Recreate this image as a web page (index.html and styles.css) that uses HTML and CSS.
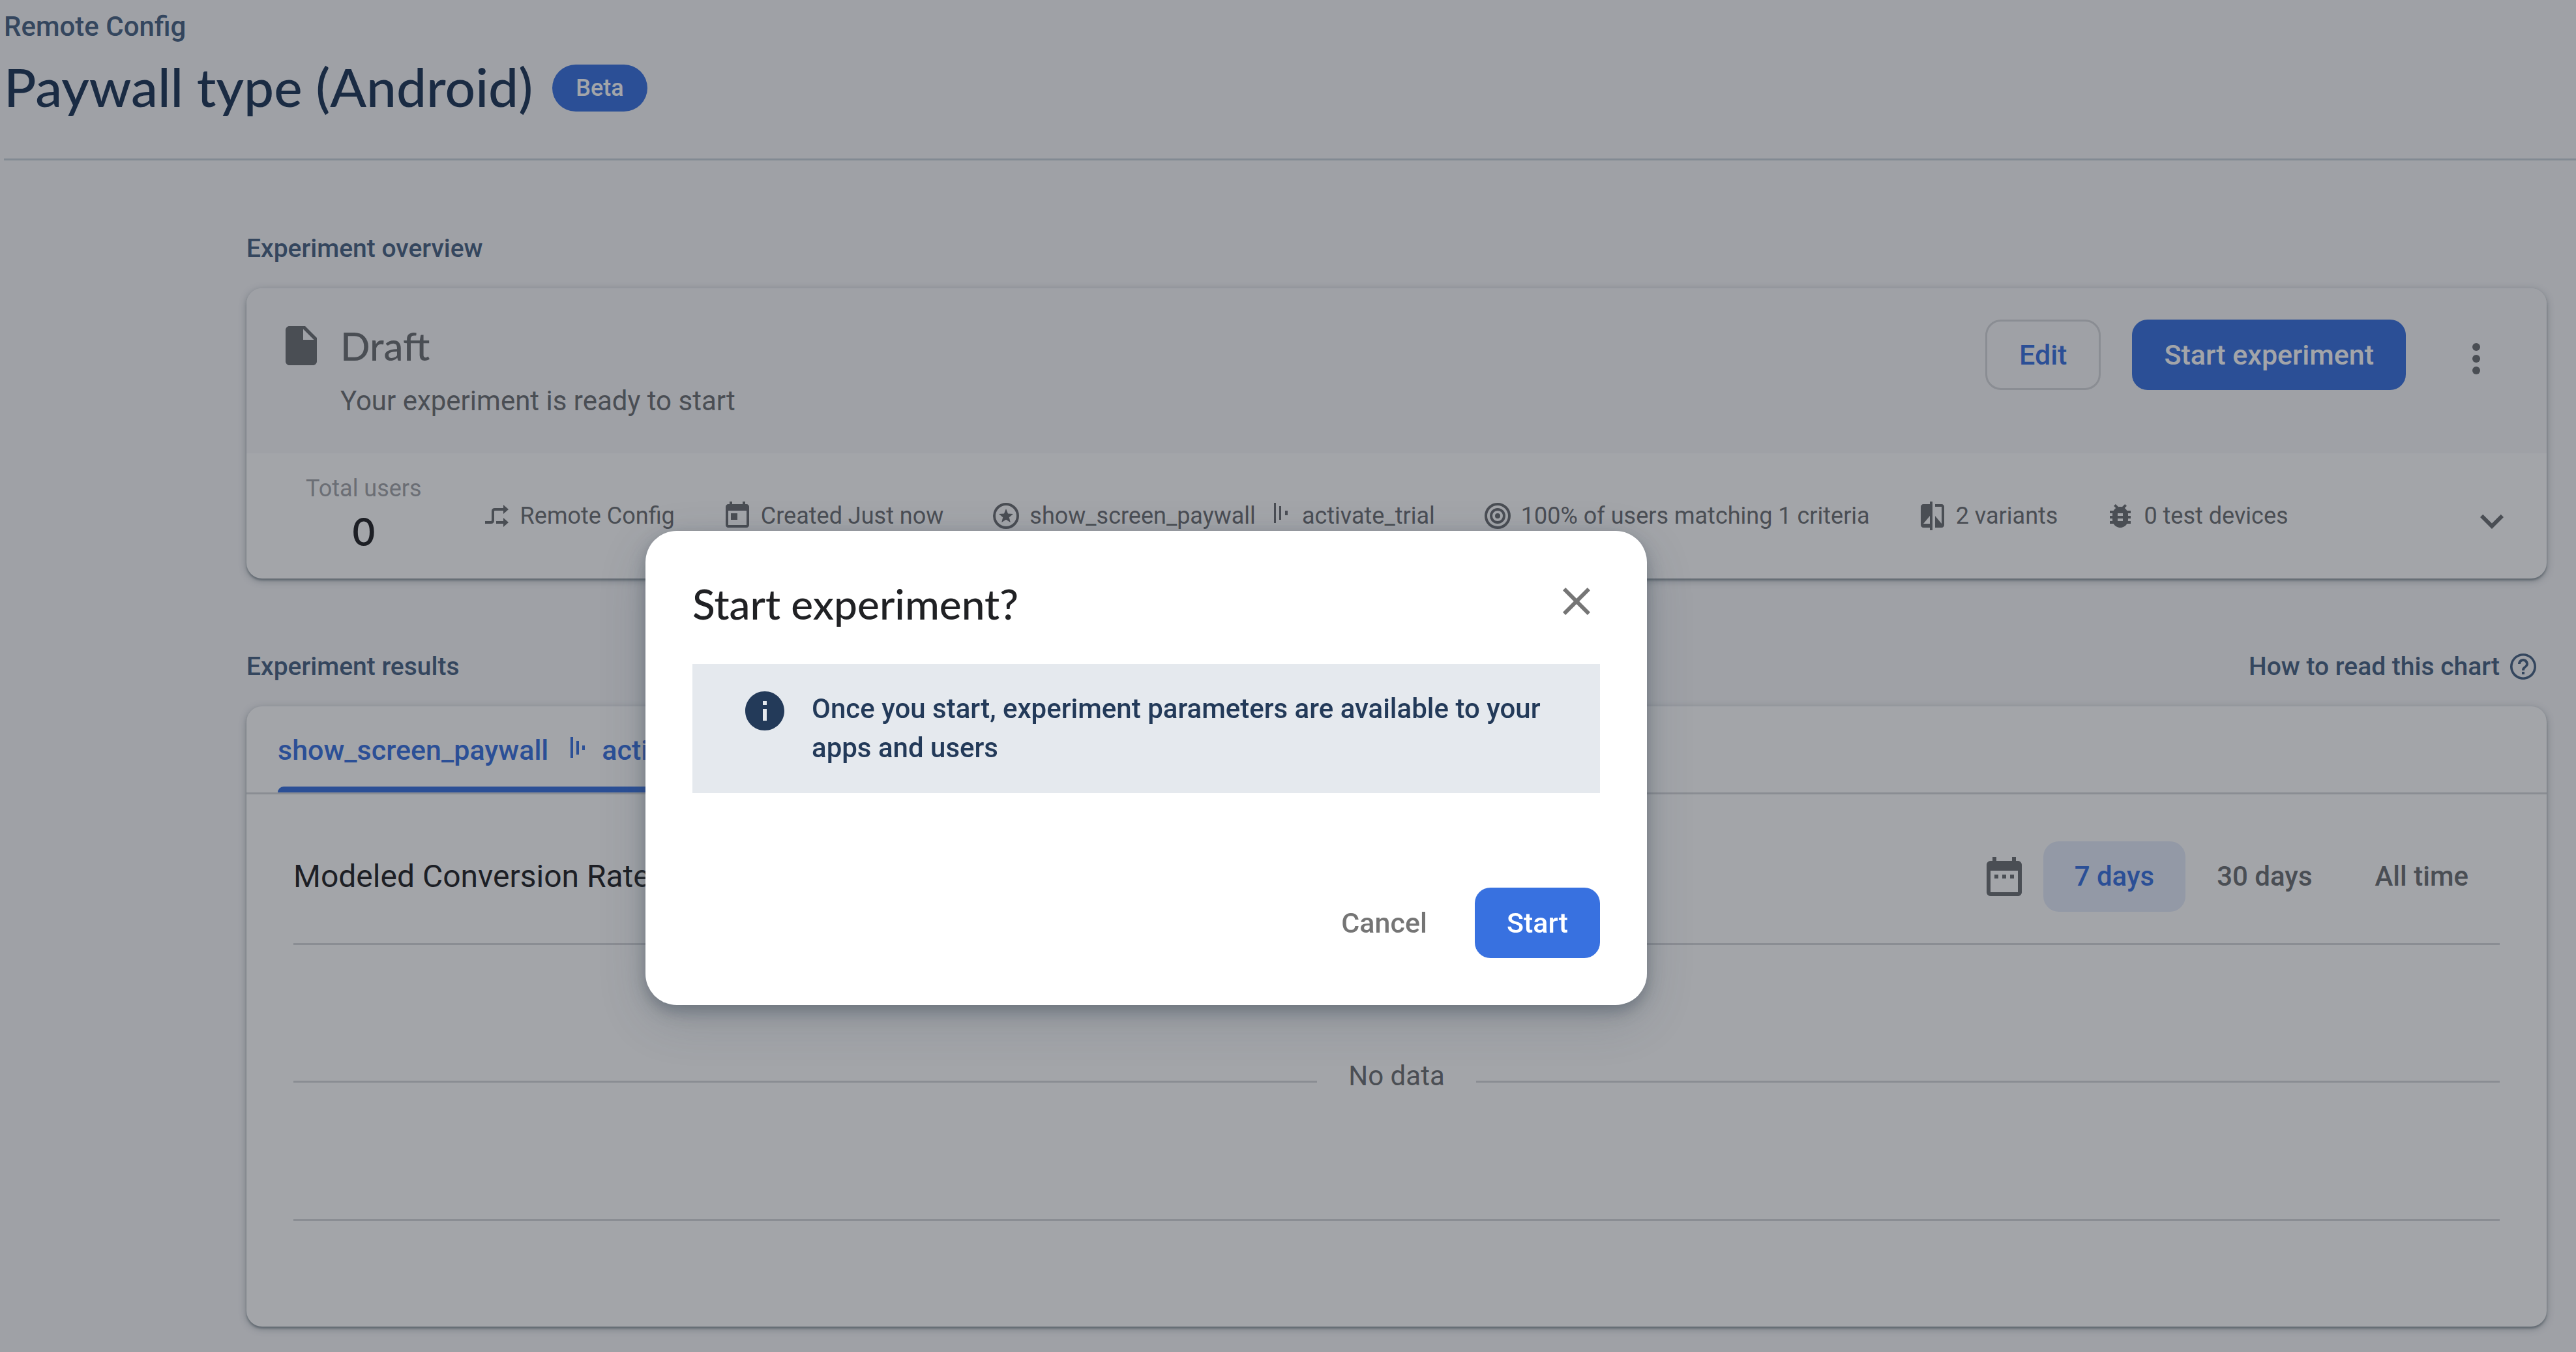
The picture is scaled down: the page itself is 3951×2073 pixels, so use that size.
FILE: index.html
```html
<!DOCTYPE html>
<html lang="en">
<head>
<meta charset="utf-8">
<meta name="viewport" content="width=device-width, initial-scale=1">
<title>Paywall type (Android)</title>
<link rel="stylesheet" href="styles.css">
</head>
<body>
<header class="page-header">
  <a class="crumb" href="#">Remote Config</a>
  <div class="title-row">
    <h1 class="page-title">Paywall type (Android)</h1>
    <span class="badge">Beta</span>
  </div>
</header>

<main class="content">
  <section>
    <div class="section-head">
      <h2 class="section-title">Experiment overview</h2>
    </div>
    <div class="card">
      <div class="overview-head">
        <div class="status">
          <svg class="icon-lg" viewBox="0 0 24 24" aria-hidden="true"><path d="M14 2H6c-1.1 0-1.99.9-1.99 2L4 20c0 1.1.89 2 1.99 2H18c1.1 0 2-.9 2-2V8l-6-6zm-1 7V3.5L18.5 9H13z"/></svg>
          <h3 class="status-title">Draft</h3>
          <p class="status-text">Your experiment is ready to start</p>
        </div>
        <div class="overview-actions">
          <button class="button button-outline" type="button">Edit</button>
          <button class="button button-primary" type="button">Start experiment</button>
          <button class="icon-button more" type="button" aria-label="More options">
            <svg class="icon-lg" viewBox="0 0 24 24" aria-hidden="true"><circle cx="12" cy="6" r="2"/><circle cx="12" cy="12" r="2"/><circle cx="12" cy="18" r="2"/></svg>
          </button>
        </div>
      </div>
      <div class="overview-body">
        <div class="total">
          <span class="total-label">Total users</span>
          <span class="total-value">0</span>
        </div>
        <ul class="facts">
          <li class="fact">
            <svg class="icon" viewBox="0 0 24 24" aria-hidden="true"><path d="M3 17h4.500q1.500 0 1.500-1.500v-7q0-1.500 1.500-1.500H18M11.500 17H18" fill="none" stroke="currentColor" stroke-width="2"/><path d="M17 3.500 21 7l-4 3.500zM17 13.500l4 3.500-4 3.500z"/></svg>
            Remote Config
          </li>
          <li class="fact">
            <svg class="icon" viewBox="0 0 24 24" aria-hidden="true"><path d="M19 3h-1V1h-2v2H8V1H6v2H5c-1.110 0-1.990.9-1.990 2L3 19c0 1.100.89 2 2 2h14c1.100 0 2-.9 2-2V5c0-1.100-.9-2-2-2zm0 16H5V8h14v11zM7 10h5v5H7z"/></svg>
            Created Just now
          </li>
          <li class="fact">
            <svg class="icon" viewBox="0 0 24 24" aria-hidden="true"><circle cx="12" cy="12" r="9" fill="none" stroke="currentColor" stroke-width="2"/><path d="M12 6.500l1.500 3.700 4 .3-3.100 2.600 1 3.900L12 14.900 8.600 17l1-3.900-3.100-2.600 4-.3z"/></svg>
            <span>show_screen_paywall</span>
            <svg class="funnel" viewBox="0 0 24 48" aria-hidden="true"><path d="M0 4h3v31H0zM8 9h3v21H8zM17 16h4v7h-4z"/></svg>
            <span>activate_trial</span>
          </li>
          <li class="fact">
            <svg class="icon" viewBox="0 0 24 24" aria-hidden="true"><g fill="none" stroke="currentColor" stroke-width="2"><circle cx="12" cy="12" r="9"/><circle cx="12" cy="12" r="5"/></g><circle cx="12" cy="12" r="2"/></svg>
            100% of users matching 1 criteria
          </li>
          <li class="fact">
            <svg class="icon" viewBox="0 0 24 24" aria-hidden="true"><path d="M10 3H5c-1.100 0-2 .9-2 2v14c0 1.100.9 2 2 2h5v2h2V1h-2v2zm0 15H5l5-6v6zm9-15h-5v2h5v13l-5-6v9h5c1.100 0 2-.9 2-2V5c0-1.100-.9-2-2-2z"/></svg>
            2 variants
          </li>
          <li class="fact">
            <svg class="icon" viewBox="0 0 24 24" aria-hidden="true"><path d="M20 8h-2.810c-.45-.78-1.070-1.450-1.820-1.960L17 4.410 15.590 3l-2.170 2.170C12.960 5.060 12.490 5 12 5c-.49 0-.96.060-1.410.170L8.410 3 7 4.410l1.620 1.630C7.880 6.550 7.260 7.220 6.810 8H4v2h2.090c-.05.33-.09.66-.09 1v1H4v2h2v1c0 .34.04.67.09 1H4v2h2.810c1.040 1.790 2.970 3 5.190 3s4.150-1.210 5.190-3H20v-2h-2.090c.05-.33.09-.66.09-1v-1h2v-2h-2v-1c0-.34-.04-.67-.09-1H20V8zm-6 8h-4v-2h4v2zm0-4h-4v-2h4v2z"/></svg>
            0 test devices
          </li>
        </ul>
        <button class="icon-button expand" type="button" aria-label="Show details">
          <svg class="icon-lg" viewBox="0 0 24 24" aria-hidden="true"><path d="M16.590 8.590L12 13.170 7.410 8.590 6 10l6 6 6-6z"/></svg>
        </button>
      </div>
    </div>
  </section>

  <section>
    <div class="section-head">
      <h2 class="section-title">Experiment results</h2>
      <a class="help" href="#">How to read this chart
        <svg class="icon" viewBox="0 0 24 24" aria-hidden="true"><path d="M11 18h2v-2h-2v2zm1-16C6.480 2 2 6.480 2 12s4.480 10 10 10 10-4.480 10-10S17.520 2 12 2zm0 18.200c-4.520 0-8.200-3.680-8.200-8.200S7.480 3.800 12 3.800s8.200 3.680 8.200 8.200-3.680 8.200-8.200 8.200zm0-14.200c-2.210 0-4 1.790-4 4h2c0-1.100.9-2 2-2s2 .9 2 2c0 2-3 1.750-3 5h2c0-2.250 3-2.500 3-5 0-2.210-1.790-4-4-4z"/></svg>
      </a>
    </div>
    <div class="card">
      <div class="tabs">
        <button class="tab" type="button">
          <span>show_screen_paywall</span>
          <svg class="funnel" viewBox="0 0 24 48" aria-hidden="true"><path d="M0 4h4v32H0zM9 10h4v21H9zM18 17h4v7h-4z"/></svg>
          <span>activate_trial</span>
        </button>
      </div>
      <div class="chart">
        <div class="chart-head">
          <h3 class="chart-title">Modeled Conversion Rate</h3>
          <svg class="icon-lg" viewBox="0 0 24 24" aria-hidden="true"><path d="M19 4h-1V2h-2v2H8V2H6v2H5c-1.100 0-2 .9-2 2v14c0 1.100.9 2 2 2h14c1.100 0 2-.9 2-2V6c0-1.100-.9-2-2-2zm0 16H5V9h14v11zM7 11h2v2H7zm4 0h2v2h-2zm4 0h2v2h-2z"/></svg>
          <div class="ranges">
            <button class="range range-active" type="button">7 days</button>
            <button class="range" type="button">30 days</button>
            <button class="range" type="button">All time</button>
          </div>
        </div>
        <div class="empty"><span class="empty-text">No data</span></div>
      </div>
    </div>
  </section>
</main>

<div class="scrim">
  <section class="dialog" role="dialog" aria-modal="true" aria-labelledby="dialog-title">
    <div class="dialog-head">
      <h2 class="dialog-title" id="dialog-title">Start experiment?</h2>
      <button class="icon-button close" type="button" aria-label="Close">
        <svg class="icon-lg" viewBox="0 0 24 24" aria-hidden="true"><path d="M19 6.410L17.590 5 12 10.590 6.410 5 5 6.410 10.590 12 5 17.590 6.410 19 12 13.410 17.590 19 19 17.590 13.410 12z"/></svg>
      </button>
    </div>
    <div class="notice">
      <svg class="icon-lg" viewBox="0 0 24 24" aria-hidden="true"><path d="M12 2C6.480 2 2 6.480 2 12s4.480 10 10 10 10-4.480 10-10S17.520 2 12 2zm1 15h-2v-6h2v6zm0-8h-2V7h2v2z"/></svg>
      <p class="notice-text">Once you start, experiment parameters are available to your apps and users</p>
    </div>
    <div class="dialog-actions">
      <button class="button button-text" type="button">Cancel</button>
      <button class="button button-primary" type="button">Start</button>
    </div>
  </section>
</div>
</body>
</html>
```
FILE: styles.css
```css
:root {
  --navy: #476282;
  --navy-dark: #1b3456;
  --blue: #3871e0;
  --grey: #6c6e72;
  --ink: #202124;
  --line: #d6d7da;
  --page: #f8f8fa;
  --body-font: "Roboto", sans-serif;
  --display-font: "Lato", sans-serif;
}

* { box-sizing: border-box; }

body {
  margin: 0;
  background: var(--page);
  color: var(--grey);
  font: 400 36px/48px var(--body-font);
}

h1, h2, h3, p, ul { margin: 0; padding: 0; }
svg { display: block; flex: none; fill: currentColor; }

button {
  margin: 0;
  padding: 0;
  border: 0;
  background: none;
  color: inherit;
  font: 500 43px/60px var(--body-font);
  white-space: nowrap;
}

.icon { width: 48px; height: 48px; }
.icon-lg { width: 72px; height: 72px; }
.funnel { width: 24px; height: 48px; }

/* Page header */
.page-header {
  margin-left: 6px;
  padding: 14px 0 60px;
  border-bottom: 3px solid #c9d2db;
}
.crumb {
  display: block;
  color: var(--navy);
  font: 500 42px/54px var(--body-font);
  text-decoration: none;
}
.title-row {
  display: flex;
  align-items: center;
  gap: 30px;
  margin-top: 19px;
}
.page-title {
  padding-bottom: 6px;
  color: var(--navy-dark);
  font: 500 82px/90px var(--display-font);
}
.badge {
  padding: 12px 36px;
  border-radius: 36px;
  background: var(--blue);
  color: #fff;
  font-weight: 500;
}

/* Sections */
.content {
  display: flex;
  flex-direction: column;
  gap: 111px;
  padding: 111px 45px 39px 378px;
}
.section-head {
  display: flex;
  justify-content: space-between;
  margin-bottom: 37px;
  padding-right: 12px;
  color: var(--navy);
}
.section-title { font: 500 39px/48px var(--body-font); }
.help {
  display: flex;
  align-items: center;
  gap: 12px;
  color: inherit;
  font: 500 39px/48px var(--body-font);
  text-decoration: none;
}
.card {
  border-radius: 24px;
  background: #fff;
  box-shadow: 0 3px 3px rgba(68, 84, 95, .4), 0 3px 12px rgba(68, 84, 95, .4);
}

/* Overview card */
.overview-head {
  display: flex;
  justify-content: space-between;
  padding: 48px 36px 53px 48px;
  border-radius: 24px 24px 0 0;
  background: var(--page);
}
.status {
  display: grid;
  grid-template-columns: 72px auto;
  align-items: center;
  gap: 18px 24px;
}
.status-title { font: 500 60px/80px var(--display-font); }
.status-text {
  grid-column: 2;
  font-size: 42px;
  line-height: 54px;
}
.overview-actions {
  display: flex;
  align-items: flex-start;
}
.button {
  padding: 24px 49px;
  border-radius: 24px;
}
.button-outline {
  padding: 21px 49px;
  border: 3px solid var(--line);
  color: var(--blue);
}
.button-outline + .button { margin-left: 48px; }
.button-primary { background: var(--blue); color: #fff; }
.icon-button { display: grid; place-items: center; }
.more { width: 144px; height: 120px; margin-left: 36px; }

.overview-body {
  display: flex;
  align-items: flex-start;
  padding: 24px 48px 38px 91px;
}
.total {
  display: flex;
  flex-direction: column;
  align-items: center;
}
.total-label { color: #a2a4a8; line-height: 60px; }
.total-value {
  color: var(--ink);
  font: 600 60px/70px var(--display-font);
}
.facts {
  display: flex;
  flex: 1;
  gap: 72px;
  margin: 48px 0 0 91px;
  list-style: none;
  white-space: nowrap;
}
.fact { display: flex; gap: 12px; }
.fact .funnel { margin: 0 7px 0 16px; }
.expand { margin-top: 44px; }

/* Results card */
.tabs {
  display: flex;
  padding: 0 48px;
  border-bottom: 3px solid var(--line);
}
.tab {
  display: flex;
  align-items: center;
  padding-top: 37px;
  flex-wrap: wrap;
  gap: 26px 24px;
  color: var(--blue);
}
.tab::after {
  flex: 0 0 100%;
  height: 9px;
  border-radius: 9px 9px 0 0;
  background: var(--blue);
  content: "";
}
.tab .funnel { margin-left: 10px; }
.chart { padding: 0 72px 162px; }
.chart-head {
  display: flex;
  align-items: center;
  gap: 24px;
  padding: 72px 0 48px;
  border-bottom: 3px solid var(--line);
}
.chart-title {
  flex: 1;
  color: var(--ink);
  font: 400 48px/60px var(--body-font);
}
.ranges { display: flex; }
.range {
  padding: 24px 48px;
  border-radius: 24px;
  font-size: 42px;
}
.range-active { background: #e4ebfa; color: var(--blue); }
.empty {
  display: flex;
  align-items: center;
  gap: 48px;
  padding: 177px 0 179px;
  border-bottom: 3px solid var(--line);
}
.empty::before,
.empty::after {
  flex: 1;
  height: 3px;
  background: var(--line);
  content: "";
}
.empty-text { padding-bottom: 16px; font-size: 42px; }

/* Confirmation dialog over the dimmed page */
.scrim {
  position: fixed;
  inset: 0;
  padding: 814px 0 0 990px;
  background: rgba(26, 31, 41, .4);
}
.dialog {
  width: 1536px;
  max-width: 100%;
  padding: 72px;
  border-radius: 48px;
  background: #fff;
  box-shadow: 0 9px 24px rgba(50, 65, 80, .4), 0 24px 72px rgba(50, 65, 80, .2);
}
.dialog-head {
  display: flex;
  justify-content: space-between;
  align-items: flex-start;
}
.dialog-title {
  color: var(--ink);
  font: 500 64px/80px var(--display-font);
}
.close { color: #757575; }
.notice {
  display: flex;
  gap: 36px;
  margin-top: 52px;
  padding: 36px 75px;
  background: #e5e9ee;
  color: #233a59;
}
.notice-text {
  padding: 3px 0;
  font: 500 42px/60px var(--body-font);
}
.dialog-actions {
  display: flex;
  justify-content: flex-end;
  gap: 24px;
  margin-top: 145px;
}
.button-text { color: #757575; }
```
